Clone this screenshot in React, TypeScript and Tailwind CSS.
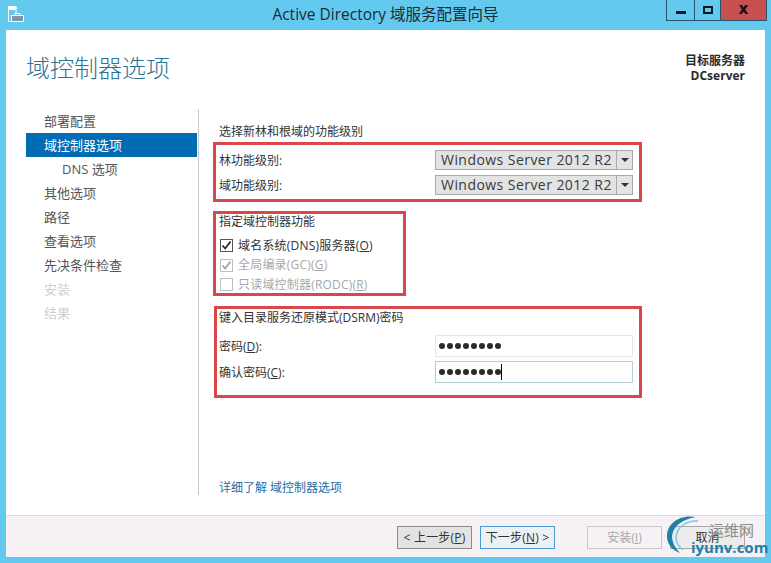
import React from 'react';

const font = { fontFamily: '"Open Sans", "Noto Sans CJK SC", sans-serif' };

const steps = [
  { label: '部署配置' },
  { label: '域控制器选项', active: true },
  { label: 'DNS 选项', sub: true },
  { label: '其他选项' },
  { label: '路径' },
  { label: '查看选项' },
  { label: '先决条件检查' },
  { label: '安装', disabled: true },
  { label: '结果', disabled: true },
];

const Combo = () => (
  <div className="w-[198px] h-[20px] flex bg-[#e3e3e3] border border-[#a9a9a9] text-[14px] leading-[18px] tracking-[0.45px] text-[#3a3a3a]">
    <span className="flex-1 pl-[5px]">Windows Server 2012 R2</span>
    <span className="w-[16px] border-l border-[#a9a9a9] flex items-center justify-center">
      <span className="w-0 h-0 border-x-[4px] border-x-transparent border-t-[4px] border-t-[#333]" />
    </span>
  </div>
);

const Check = ({ checked, disabled, label, keyName }: { checked?: boolean; disabled?: boolean; label: string; keyName: string }) => (
  <div className={`flex items-center h-[19.5px] gap-[5px] ml-[1px] text-[12px] tracking-[0.2px] ${disabled ? 'text-[#a8a8a8]' : 'text-[#333]'}`}>
    <span className={`w-[13px] h-[13px] border flex items-center justify-center ${disabled ? 'border-[#c0c0c0]' : 'border-[#555]'}`}>
      {checked && (
        <svg width="11" height="11" viewBox="0 0 11 11" fill="none">
          <path d="M1.5 5.5 L4.2 8.5 L9.5 1.5" stroke={disabled ? '#a0a0a0' : '#222'} strokeWidth="1.7" />
        </svg>
      )}
    </span>
    <span>
      {label}(<span className="underline">{keyName}</span>)
    </span>
  </div>
);

const Password = ({ focused }: { focused?: boolean }) => (
  <div className={`w-[198px] h-[22px] flex items-center pl-[3px] border bg-white ${focused ? 'border-[#b7cdd6]' : 'border-[#e2e8ea]'}`}>
    <span className="flex gap-[2px]">
      {[0, 1, 2, 3, 4, 5, 6, 7].map((i) => (
        <span key={i} className="w-[6px] h-[6px] rounded-full bg-[#2a2a2a]" />
      ))}
    </span>
    {focused && <span className="w-px h-[16px] bg-black" />}
  </div>
);

const Btn = ({ children, className }: { children: React.ReactNode; className?: string }) => (
  <button className={`w-[75px] h-[23px] border text-[12px] flex items-center justify-center ${className ?? ''}`}>
    {children}
  </button>
);

export default function App() {
  return (
    <div style={font} className="w-[771px] h-[563px] bg-[#63c9ee] flex flex-col overflow-hidden relative">
      <div className="h-[30px] flex shrink-0 relative">
        <svg className="ml-[8px] mt-[6px]" width="17" height="17" viewBox="0 0 17 17" fill="none" stroke="#fff" strokeWidth="1">
          <path d="M0.5 16 V0.5 H8 V7" />
          <path d="M0.5 0.5 H8 V3.5 H0.5 Z" fill="#fff" />
          <path d="M3.5 9.5 H15.5 V15.5 H3.5 Z" fill="#7f98a8" />
          <path d="M0.5 15.5 H3.5 M7 9.5 V7.5 H12 V9.5" />
        </svg>
        <div className="absolute inset-x-0 top-[4px] text-center text-[15.5px] leading-[20px] text-[#1d2b33]">
          Active Directory 域服务配置向导
        </div>
        <div className="absolute right-[4px] top-0 flex h-[21px] border border-t-0 border-[#28556b]">
          <span className="w-[28px] border-r border-[#28556b] flex items-center justify-center">
            <span className="w-[10px] h-[3px] mt-[4px] bg-[#0c1a22]" />
          </span>
          <span className="w-[26px] border-r border-[#28556b] flex items-center justify-center">
            <span className="w-[10px] h-[8px] border-2 border-[#0c1a22]" />
          </span>
          <span className="w-[45px] bg-[#c75050] flex items-center justify-center text-[13px] font-extrabold text-[#111]">
            X
          </span>
        </div>
      </div>

      <div className="flex-1 mx-[6px] mb-[6px] bg-white flex flex-col min-h-0">
        <div className="h-[79px] shrink-0 flex justify-between pl-[20px] pr-[20px]">
          <h1 className="mt-[22px] text-[24px] leading-[32px] text-[#2a7396] font-light">域控制器选项</h1>
          <div className="mt-[23px] text-right text-[12px] leading-[15px] font-semibold text-[#2b2b2b]">
            <div>目标服务器</div>
            <div className="font-bold">DCserver</div>
          </div>
        </div>

        <div className="flex h-[386px] shrink-0">
          <nav className="ml-[20px] w-[171px] shrink-0 text-[13px]">
            {steps.map((s) => (
              <div
                key={s.label}
                className={`h-[24px] leading-[24px] ${s.sub ? 'pl-[36px]' : 'pl-[18px]'} ${
                  s.active ? 'bg-[#006cb4] text-white' : s.disabled ? 'text-[#d0d0d0]' : 'text-[#555]'
                }`}
              >
                {s.label}
              </div>
            ))}
          </nav>
          <div className="ml-[1px] w-px bg-[#c8c8c8]" />
          <div className="flex-1 relative text-[12px] text-[#333] flex flex-col pl-[14px]">
            <div className="mt-[15px] ml-[6px] leading-[16px]">选择新林和根域的功能级别</div>
            <div className="mt-[2px] w-[429px] h-[60px] border-[3px] border-[#d9474a] flex flex-col justify-center gap-[5px] pl-[3px] pr-[6px]">
              <div className="flex justify-between items-center">
                <span className="mt-[2px]">林功能级别:</span>
                <Combo />
              </div>
              <div className="flex justify-between items-center">
                <span className="mt-[2px]">域功能级别:</span>
                <Combo />
              </div>
            </div>
            <div className="mt-[9px] w-[193px] h-[85px] border-[3px] border-[#d9474a] pl-[3px]">
              <div className="leading-[16px] mb-[6px]">指定域控制器功能</div>
              <Check checked label="域名系统(DNS)服务器" keyName="O" />
              <Check checked disabled label="全局编录(GC)" keyName="G" />
              <Check disabled label="只读域控制器(RODC)" keyName="R" />
            </div>
            <div className="mt-[10px] ml-[1px] w-[428px] h-[92px] border-[3px] border-[#d9474a] pl-[2px] pr-[6px]">
              <div className="leading-[16px] mt-[1px] mb-[9px]">键入目录服务还原模式(DSRM)密码</div>
              <div className="flex justify-between items-center mb-[4px]">
                <span className="mt-[2px]">
                  密码(<span className="underline">D</span>):
                </span>
                <Password />
              </div>
              <div className="flex justify-between items-center">
                <span className="mt-[2px]">
                  确认密码(<span className="underline">C</span>):
                </span>
                <Password focused />
              </div>
            </div>
            <a className="mt-auto mb-[-1px] ml-[6px] leading-[16px] text-[#1d6fa5]">详细了解 域控制器选项</a>
          </div>
        </div>

        <div className="flex-1 mt-[20px] border-t border-[#dcdcdc] bg-[#f5f1f5] flex items-start pt-[10px] pr-[20px] justify-end text-[#333]">
          <Btn className="bg-[#e3e3e3] border-[#8a8a8a] tracking-[0.2px]">
            {'< '}上一步(<span className="underline">P</span>)
          </Btn>
          <Btn className="ml-[8px] bg-[#eaf2f8] border-[#4b9bd0] tracking-[0.2px]">
            下一步(<span className="underline">N</span>) {'>'}
          </Btn>
          <Btn className="ml-[32px] border-[#c8c8c8] text-[#a8a8a8]">
            安装(<span className="underline">I</span>)
          </Btn>
          <Btn className="ml-[8px] bg-[#ececec] border-[#a8a8a8]">取消</Btn>
        </div>
      </div>

      {/* watermark over the footer */}
      <div className="absolute left-[664px] top-[514px] w-[107px] h-[49px] pointer-events-none">
        <svg className="absolute left-0 top-0" width="44" height="44" viewBox="0 0 44 44" fill="none">
          <path d="M32 3 C15 0 3 10 3 22 C3 30 8 36 16 39 C11 34 8 28 8 22 C9 12 19 5 32 3 Z" fill="#1f7fa8" />
          <path d="M34 7 C24 6 13 12 12 23 C12 29 15 33 19 36" stroke="#7cc6e2" strokeWidth="1.5" />
        </svg>
        <span className="absolute left-[45px] top-[6px] text-[15px] leading-[20px] text-[#8d8d8d]">运维网</span>
        <span className="absolute left-[27px] top-[24px] text-[15px] leading-[18px] font-bold text-[#1d7fb0]">
          iyunv.com
        </span>
      </div>
    </div>
  );
}
